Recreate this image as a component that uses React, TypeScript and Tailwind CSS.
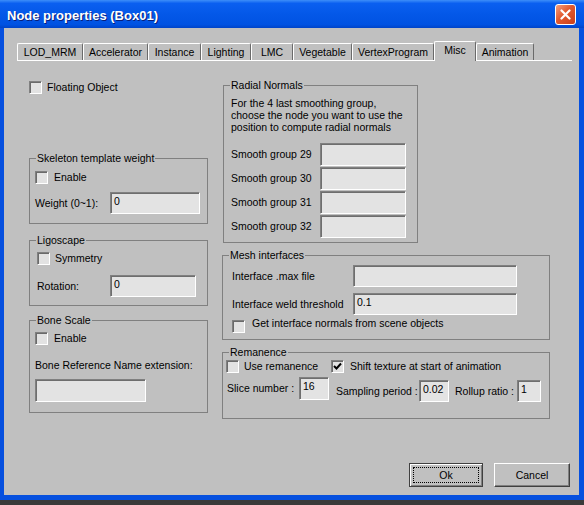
import React from 'react';

const tabs = [
    { label: 'LOD_MRM', w: 'w-[66px]' },
    { label: 'Accelerator', w: 'w-[65px]' },
    { label: 'Instance', w: 'w-[53px]' },
    { label: 'Lighting', w: 'w-[50px]' },
    { label: 'LMC', w: 'w-[42px]' },
    { label: 'Vegetable', w: 'w-[59px]' },
    { label: 'VertexProgram', w: 'w-[82px]' },
    { label: 'Misc', w: 'w-[42px]', active: true },
    { label: 'Animation', w: 'w-[58px]' },
];

function Check({ checked }: { checked?: boolean }) {
    return (
        <span className="flex h-[13px] w-[13px] shrink-0 items-center justify-center border border-t-[#808080] border-l-[#808080] border-b-white border-r-white bg-[#e2e2e2] shadow-[inset_1px_1px_0_#6a6a6a]">
            {checked && (
                <svg width="9" height="9" viewBox="0 0 9 9">
                    <path d="M1 4 L3.5 6.5 L8 1.5" fill="none" stroke="#000" strokeWidth="2" />
                </svg>
            )}
        </span>
    );
}

function Field({ className, value }: { className: string; value?: string }) {
    return (
        <div
            className={`flex shrink-0 items-start border border-t-[#808080] border-l-[#808080] border-b-white border-r-white bg-[#e3e3e3] pl-[3px] pt-[2px] leading-[13px] shadow-[inset_1px_1px_0_#6e6e6e] ${className}`}
        >
            {value}
        </div>
    );
}

function Group({ title, className, children }: { title: string; className: string; children?: React.ReactNode }) {
    return (
        <div className={`relative border border-[#808080] ${className}`}>
            <span className="absolute left-[6px] top-[-7px] bg-[#c0c0c0] px-[1px] leading-[13px]">{title}</span>
            {children}
        </div>
    );
}

export default function App() {
    return (
        <div className="flex h-[505px] w-[584px] flex-col bg-[#3a3a3a] font-['Liberation_Sans',Arial,sans-serif] text-[10.5px] leading-[13px] text-black">
            <div className="flex h-[500px] flex-col">
                {/* Title bar */}
                <div className="flex h-[28px] shrink-0 items-center bg-[linear-gradient(to_bottom,#3d8ef9_0%,#0a5ff0_12%,#0458e8_50%,#0052e2_88%,#0044c8_100%)]">
                    <span className="pl-[7px] pt-[2px] text-[13px] font-bold text-white [text-shadow:1px_1px_0_#0a1f7a]">
                        Node properties (Box01)
                    </span>
                    <div className="ml-auto mr-[8px] flex h-[21px] w-[21px] items-center justify-center rounded-[3px] border border-white bg-[linear-gradient(135deg,#f4a080_0%,#e2592e_45%,#c9401a_100%)]">
                        <svg width="11" height="11" viewBox="0 0 11 11">
                            <path d="M1.5 1.5 L9.5 9.5 M9.5 1.5 L1.5 9.5" stroke="#fff" strokeWidth="2.2" strokeLinecap="round" />
                        </svg>
                    </div>
                </div>

                {/* Body */}
                <div className="flex flex-1 flex-col border-b-[5px] border-l-4 border-r-[5px] border-[#0650df] bg-[#c0c0c0]">
                    {/* Tabs */}
                    <div className="ml-[13px] mt-[13px] flex h-[20px] w-[555px] items-end border-b border-white">
                        {tabs.map((t) =>
                            t.active ? (
                                <div
                                    key={t.label}
                                    className={`relative z-10 -mb-[1px] flex h-[20px] ${t.w} items-center justify-center rounded-t-[2px] border-l border-t border-l-white border-t-white border-r border-r-[#6a6a6a] bg-[#c0c0c0] pb-[2px]`}
                                >
                                    {t.label}
                                </div>
                            ) : (
                                <div
                                    key={t.label}
                                    className={`flex h-[17px] ${t.w} items-center justify-center rounded-t-[2px] border-l border-t border-l-white border-t-white border-r border-r-[#6a6a6a]`}
                                >
                                    {t.label}
                                </div>
                            )
                        )}
                    </div>

                    <div className="ml-[25px] flex items-start">
                        {/* Left column */}
                        <div className="flex w-[179px] flex-col">
                            <div className="mt-[20px] flex h-[13px] items-center">
                                <Check />
                                <span className="ml-[5px]">Floating Object</span>
                            </div>

                            <Group title="Skeleton template weight" className="mt-[64px] h-[66px] pl-[5px] pt-[12px]">
                                <div className="flex h-[13px] items-center">
                                    <Check />
                                    <span className="ml-[6px]">Enable</span>
                                </div>
                                <div className="mt-[8px] flex h-[22px] items-center">
                                    <span className="w-[75px]">Weight (0~1):</span>
                                    <Field className="h-[22px] w-[90px]" value="0" />
                                </div>
                            </Group>

                            <Group title="Ligoscape" className="mt-[16px] h-[66px] pl-[7px] pt-[11px]">
                                <div className="flex h-[13px] items-center">
                                    <Check />
                                    <span className="ml-[5px]">Symmetry</span>
                                </div>
                                <div className="mt-[10px] flex h-[22px] items-center">
                                    <span className="w-[73px]">Rotation:</span>
                                    <Field className="h-[22px] w-[86px]" value="0" />
                                </div>
                            </Group>

                            <Group title="Bone Scale" className="mt-[14px] h-[93px] pl-[5px] pt-[11px]">
                                <div className="flex h-[13px] items-center">
                                    <Check />
                                    <span className="ml-[6px]">Enable</span>
                                </div>
                                <div className="mt-[14px]">Bone Reference Name extension:</div>
                                <Field className="mt-[7px] h-[23px] w-[111px]" />
                            </Group>
                        </div>

                        {/* Right column */}
                        <div className="ml-[14px] flex w-[328px] flex-col">
                            <Group title="Radial Normals" className="ml-[1px] mt-[24px] h-[158px] w-[195px] pl-[7px] pt-[11px]">
                                <p className="leading-[12px]">
                                    For the 4 last smoothing group,
                                    <br />
                                    choose the node you want to use the
                                    <br />
                                    position to compute radial normals
                                </p>
                                <div className="mt-[10px] flex flex-col gap-[1px]">
                                    {['29', '30', '31', '32'].map((n) => (
                                        <div key={n} className="flex h-[23px] items-center">
                                            <span className="w-[89px]">Smooth group {n}</span>
                                            <Field className="h-[23px] w-[86px]" />
                                        </div>
                                    ))}
                                </div>
                            </Group>

                            <Group title="Mesh interfaces" className="mt-[12px] h-[85px] pl-[9px] pt-[9px]">
                                <div className="flex h-[22px] items-center">
                                    <span className="w-[121px]">Interface .max file</span>
                                    <Field className="h-[22px] w-[164px]" />
                                </div>
                                <div className="mt-[6px] flex h-[22px] items-center">
                                    <span className="w-[121px]">Interface weld threshold</span>
                                    <Field className="h-[22px] w-[164px]" value="0.1" />
                                </div>
                                <div className="mt-[5px] flex items-start">
                                    <Check />
                                    <span className="-mt-[3px] ml-[7px]">Get interface normals from scene objects</span>
                                </div>
                            </Group>

                            <Group title="Remanence" className="mt-[12px] h-[67px] pl-[3px] pt-[7px]">
                                <div className="flex h-[13px] items-center">
                                    <Check />
                                    <span className="ml-[5px] w-[87px]">Use remanence</span>
                                    <Check checked />
                                    <span className="ml-[6px]">Shift texture at start of animation</span>
                                </div>
                                <div className="mt-[4px] flex items-start">
                                    <div className="flex items-center">
                                        <span className="w-[73px] pl-[1px]">Slice number :</span>
                                        <Field className="h-[23px] w-[30px]" value="16" />
                                    </div>
                                    <div className="ml-[7px] mt-[3px] flex items-center">
                                        <span className="w-[83px]">Sampling period :</span>
                                        <Field className="h-[22px] w-[30px]" value="0.02" />
                                    </div>
                                    <div className="ml-[6px] mt-[3px] flex items-center">
                                        <span className="w-[62px]">Rollup ratio :</span>
                                        <Field className="h-[22px] w-[24px]" value="1" />
                                    </div>
                                </div>
                            </Group>
                        </div>
                    </div>

                    {/* Buttons */}
                    <div className="mt-[44px] flex justify-end gap-[11px] pr-[9px]">
                        <button className="relative flex h-[24px] w-[74px] items-center justify-center border border-[#404040] bg-[#c0c0c0] shadow-[inset_1px_1px_0_#fff,inset_-1px_-1px_0_#808080]">
                            <span className="absolute inset-[3px] border border-dotted border-black" />
                            Ok
                        </button>
                        <button className="flex h-[24px] w-[76px] items-center justify-center border border-b-[#404040] border-l-white border-r-[#404040] border-t-white bg-[#c0c0c0] shadow-[inset_-1px_-1px_0_#808080]">
                            Cancel
                        </button>
                    </div>
                </div>
            </div>
        </div>
    );
}
